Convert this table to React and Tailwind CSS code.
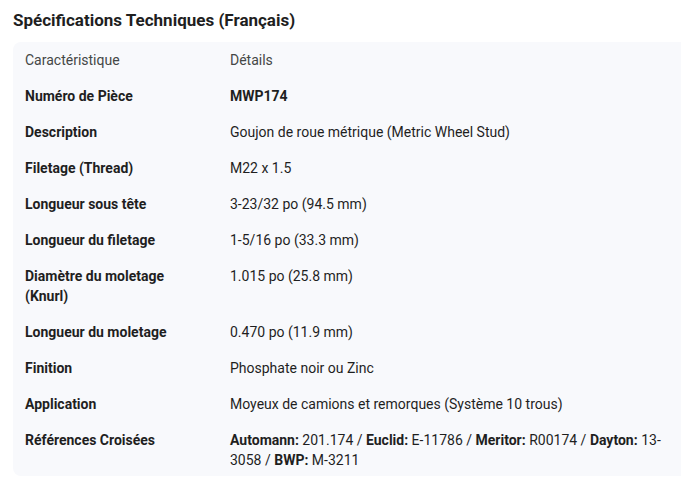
const ROWS = [
  ["Numéro de Pièce", <b className="font-bold">MWP174</b>],
  ["Description", "Goujon de roue métrique (Metric Wheel Stud)"],
  ["Filetage (Thread)", "M22 x 1.5"],
  ["Longueur sous tête", "3-23/32 po (94.5 mm)"],
  ["Longueur du filetage", "1-5/16 po (33.3 mm)"],
  ["Diamètre du moletage (Knurl)", "1.015 po (25.8 mm)"],
  ["Longueur du moletage", "0.470 po (11.9 mm)"],
  ["Finition", "Phosphate noir ou Zinc"],
  ["Application", "Moyeux de camions et remorques (Système 10 trous)"],
  [
    "Références Croisées",
    <>
      <b className="font-bold">Automann:</b> 201.174 / <b className="font-bold">Euclid:</b> E-11786 /{" "}
      <b className="font-bold">Meritor:</b> R00174 / <b className="font-bold">Dayton:</b> 13-3058 /{" "}
      <b className="font-bold">BWP:</b> M-3211
    </>,
  ],
];

export default function App() {
  return (
    <div
      className="bg-white text-[#1f1f1f] pl-[13px] pt-[9px] h-[480px]"
      style={{ fontFamily: "Roboto, 'Noto Sans', sans-serif" }}
    >
      <h2 className="text-[17px] leading-[22px] font-bold mb-[11px]">
        Spécifications Techniques (Français)
      </h2>

      <div className="bg-[#f8f9fc] rounded-l-[8px] h-[434px]">
        <table className="w-full table-fixed border-collapse text-[14px] leading-[20px]">
          <colgroup>
            <col className="w-[217px]" />
            <col />
          </colgroup>
          <thead>
            <tr>
              <th className="text-left font-normal text-[#444746] pl-3 pr-3 py-2">
                Caractéristique
              </th>
              <th className="text-left font-normal text-[#444746] pr-3 py-2">Détails</th>
            </tr>
          </thead>
          <tbody>
            {ROWS.map(([k, v]) => (
              <tr key={k}>
                <td className="align-top font-bold pl-3 pr-8 py-2">{k}</td>
                <td className="align-top pr-4 py-2 text-[#1f1f1f]">{v}</td>
              </tr>
            ))}
          </tbody>
        </table>
      </div>
    </div>
  );
}
